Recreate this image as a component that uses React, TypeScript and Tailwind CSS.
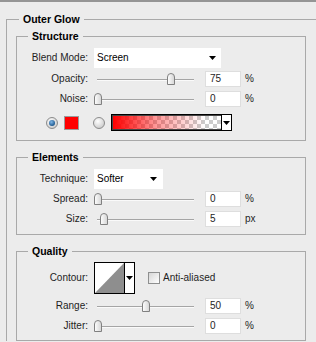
const font = { fontFamily: '"Liberation Sans", Arial, sans-serif' }

function Arrow() {
  return (
    <svg width="7" height="4" viewBox="0 0 7 4">
      <polygon points="0,0 7,0 3.5,4" fill="#000" />
    </svg>
  )
}

function Thumb() {
  return (
    <svg width="8" height="12" viewBox="0 0 8 12">
      <defs>
        <linearGradient id="thumbFill" x1="0" y1="0" x2="1" y2="0">
          <stop offset="0" stopColor="#ffffff" />
          <stop offset="1" stopColor="#d4d4d4" />
        </linearGradient>
      </defs>
      <path d="M0.5 11.5 V4 A3.5 3.5 0 0 1 7.5 4 V11.5 Z" fill="url(#thumbFill)" stroke="#808080" />
    </svg>
  )
}

function Radio({ checked }: { checked?: boolean }) {
  return (
    <svg width="12" height="12" viewBox="0 0 12 12">
      <defs>
        <radialGradient id="radioOff" cx="0.4" cy="0.35" r="0.7">
          <stop offset="0" stopColor="#ffffff" />
          <stop offset="1" stopColor="#c8c8c8" />
        </radialGradient>
        <radialGradient id="radioDot" cx="0.4" cy="0.35" r="0.7">
          <stop offset="0" stopColor="#7fb6e6" />
          <stop offset="1" stopColor="#134f86" />
        </radialGradient>
      </defs>
      <circle cx="6" cy="6" r="5.5" fill="url(#radioOff)" stroke="#8c8c8c" />
      {checked && <circle cx="6" cy="6" r="3" fill="url(#radioDot)" />}
    </svg>
  )
}

function Slider({ thumb }: { thumb: number }) {
  return (
    <div className="relative w-[103px] h-[14px] shrink-0">
      <div className="absolute left-[3px] right-[3px] top-[7px] h-[1px] bg-[#a5a5a5]" />
      <div className="absolute left-[3px] right-[3px] top-[8px] h-[1px] bg-[#fafafa]" />
      <div className="absolute top-[1px] flex" style={{ left: thumb }}>
        <Thumb />
      </div>
    </div>
  )
}

function Label({ children }: { children: React.ReactNode }) {
  return <div className="w-[71px] shrink-0 text-right text-[#1e1e1e] mr-[6px]">{children}</div>
}

function SliderRow({ label, thumb, value, unit }: { label: string; thumb: number; value: string; unit: string }) {
  return (
    <div className="flex items-center h-[20px]">
      <Label>{label}</Label>
      <Slider thumb={thumb} />
      <div className="ml-[8px] w-[36px] h-[16px] bg-white border border-[#dedede] flex items-center pl-[4px] text-[#1e1e1e]">
        {value}
      </div>
      <div className="ml-[4px] text-[#1e1e1e]">{unit}</div>
    </div>
  )
}

function Group({ title, className, children }: { title: string; className: string; children: React.ReactNode }) {
  return (
    <fieldset className={"ml-[9px] w-[290px] border border-[#a9a9a9] " + className}>
      <legend className="ml-[11px] px-[4px] font-bold text-black text-[10.5px] leading-[12px]">{title}</legend>
      {children}
    </fieldset>
  )
}

export default function App() {
  return (
    <div
      className="w-[316px] h-[342px] overflow-hidden bg-[#ececec] border-t-2 border-[#959595] text-[10px] leading-[12px]"
      style={font}
    >
      <fieldset className="mt-[11px] ml-[6px] w-[330px] border-l border-t border-[#a9a9a9]">
        <legend className="ml-[12px] px-[4px] font-bold text-black text-[10.5px] leading-[12px]">Outer Glow</legend>

        <Group title="Structure" className="mt-[5px] pt-[6px] pb-[9px]">
          <div className="flex items-center h-[20px]">
            <Label>Blend Mode:</Label>
            <div className="w-[127px] h-[20px] bg-white flex items-center justify-between pl-[3px] pr-[5px] text-black">
              <span>Screen</span>
              <Arrow />
            </div>
          </div>
          <div className="mt-[1px]">
            <SliderRow label="Opacity:" thumb={73} value="75" unit="%" />
            <SliderRow label="Noise:" thumb={0} value="0" unit="%" />
          </div>
          <div className="mt-[5px] h-[17px] flex items-center pl-[29px]">
            <Radio checked />
            <div className="ml-[6px] w-[15px] h-[14px] bg-[#ff0000] border border-[#9a9a9a]" />
            <div className="ml-[14px]">
              <Radio />
            </div>
            <div className="ml-[6px] w-[121px] h-[17px] flex border border-black bg-white">
              <div className="flex-1 border-t border-l border-b border-[#444] bg-[repeating-conic-gradient(#cccccc_0_25%,#ffffff_0_50%)] bg-[length:8px_8px]">
                <div className="h-full bg-linear-to-r from-[#ff0000] via-[#ff000066] via-40% to-[#ff000000] to-85%" />
              </div>
              <div className="w-[10px] border-l border-black flex items-center justify-center">
                <Arrow />
              </div>
            </div>
          </div>
        </Group>

        <Group title="Elements" className="mt-[10px] pt-[6px] pb-[5px]">
          <div className="flex items-center h-[20px]">
            <Label>Technique:</Label>
            <div className="w-[69px] h-[20px] bg-white flex items-center justify-between pl-[3px] pr-[6px] text-black">
              <span>Softer</span>
              <Arrow />
            </div>
          </div>
          <SliderRow label="Spread:" thumb={0} value="0" unit="%" />
          <SliderRow label="Size:" thumb={6} value="5" unit="px" />
        </Group>

        <Group title="Quality" className="mt-[10px] pt-[5px] pb-[4px]">
          <div className="flex items-center h-[32px]">
            <Label>Contour:</Label>
            <div className="w-[41px] h-[32px] flex border border-black bg-white">
              <div className="flex-1">
                <svg width="29" height="30" viewBox="0 0 29 30" className="block">
                  <polygon points="0,30 29,0 29,30" fill="#8e8e8e" />
                </svg>
              </div>
              <div className="w-[10px] border-l border-black flex items-center justify-center">
                <Arrow />
              </div>
            </div>
            <div className="ml-[13px] w-[12px] h-[12px] border border-[#8e8f8f] bg-linear-to-br from-[#d6d6d6] to-[#ffffff]" />
            <div className="ml-[3px] text-[#1e1e1e]">Anti-aliased</div>
          </div>
          <div className="mt-[2px]">
            <SliderRow label="Range:" thumb={48} value="50" unit="%" />
            <SliderRow label="Jitter:" thumb={0} value="0" unit="%" />
          </div>
        </Group>
      </fieldset>
    </div>
  )
}
